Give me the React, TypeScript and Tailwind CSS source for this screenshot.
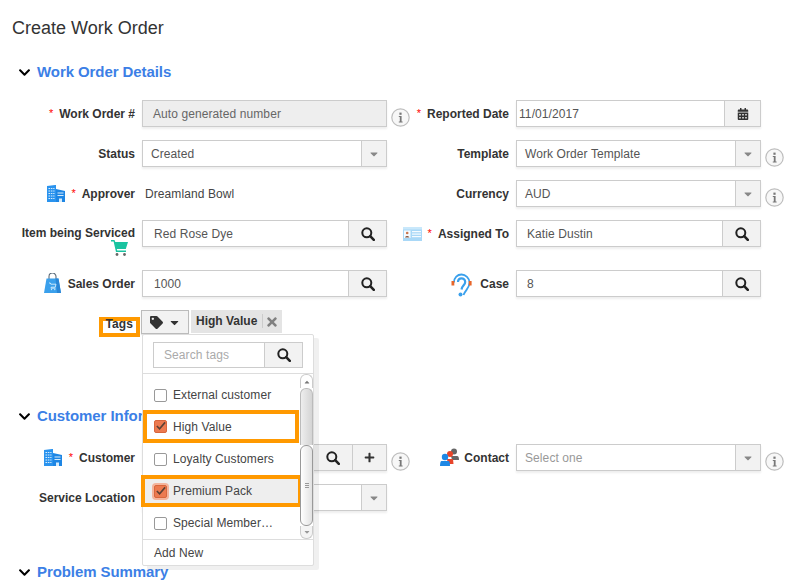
import React from "react";
import { FaCalendarAlt, FaCaretDown, FaCaretUp, FaChevronDown, FaPlus, FaTag, FaTimes } from "react-icons/fa";

const Info = () => (
  <svg width="19" height="19" viewBox="0 0 19 19" className="shrink-0">
    <circle cx="9.5" cy="9.5" r="8.7" fill="#f7f7f7" stroke="#bdbdbd" strokeWidth="1.2" />
    <rect x="8.4" y="4.6" width="2.2" height="2.2" fill="#777" />
    <path d="M7.8 8h2.8v5.4h1v1.1H7.8v-1.1h1V9.1h-1z" fill="#777" />
  </svg>
);

const SearchIcon = () => (
  <svg width="14" height="14" viewBox="0 0 14 14" className="shrink-0">
    <circle cx="5.8" cy="5.800" r="4.500" fill="none" stroke="#222" strokeWidth="2" />
    <path d="M9.200 9.200 12.800 12.800" fill="none" stroke="#222" strokeWidth="2.600" strokeLinecap="round" />
  </svg>
);

const Building = () => (
  <svg width="18" height="17" viewBox="0 0 18 17" className="shrink-0">
    <path d="M0 1 8 0h1v17H0z" fill="#2a93ee" />
    <path d="M9 4l9 2v11H9z" fill="#1e86e4" />
    <g fill="#d6ecfc">
      <rect x="1.500" y="3" width="6" height="1" /><rect x="1.500" y="5.500" width="6" height="1" /><rect x="1.500" y="8" width="6" height="1" /><rect x="1.500" y="10.500" width="6" height="1" /><rect x="1.500" y="13" width="6" height="1" />
      <rect x="10.500" y="7.500" width="6" height="1" /><rect x="10.500" y="10" width="6" height="1" /><rect x="12" y="13.500" width="3" height="3.500" />
    </g>
    <g fill="#2a93ee"><rect x="3.200" y="2" width="0.800" height="13" /><rect x="5.400" y="2" width="0.800" height="13" /></g>
  </svg>
);

const Cart = () => (
  <svg width="17" height="16" viewBox="0 0 17 16" className="shrink-0">
    <path d="M0 0h3.500l.8 2H17l-2.200 7H5.800l.4 1.500H15v1.500H5L2.600 1.500H0z" fill="#19c3a0" />
    <circle cx="6" cy="14.500" r="1.400" fill="#666" />
    <circle cx="13.500" cy="14.500" r="1.400" fill="#666" />
  </svg>
);

const Bag = () => (
  <svg width="17" height="21" viewBox="0 0 17 21" className="shrink-0">
    <path d="M5 6V3.500a3.500 3.500 0 0 1 7 0V6" fill="none" stroke="#5a6b7a" strokeWidth="1.100" />
    <path d="M2.500 5.500h12L17 20H0z" fill="#3aa0ec" />
    <path d="M11.500 5.500h3L17 20h-4z" fill="#2a86d6" />
    <path d="M5 10h1.300l.5 1.200H12l-.8 3H7.200l-.3 1H11.500" fill="none" stroke="#d8eefc" strokeWidth="0.900" />
    <circle cx="7.500" cy="16.600" r="0.700" fill="#d8eefc" /><circle cx="10.800" cy="16.600" r="0.700" fill="#d8eefc" />
  </svg>
);

const Card = () => (
  <svg width="19" height="14" viewBox="0 0 19 14" className="shrink-0">
    <rect width="19" height="14" fill="#a9d8f7" />
    <rect y="0" width="19" height="2.500" fill="#c9e8fb" />
    <rect x="1" y="3.500" width="6.500" height="7.500" fill="#f6fbff" />
    <circle cx="4.200" cy="6" r="1.300" fill="#c9764f" />
    <path d="M2 10.500c.3-2 4-2 4.400 0z" fill="#8a5a45" />
    <g fill="#f6fbff"><rect x="9" y="4" width="9" height="1.200" /><rect x="9" y="6.500" width="9" height="1.200" /><rect x="9" y="9" width="9" height="1.200" /></g>
  </svg>
);

const Ear = () => (
  <svg width="21" height="25" viewBox="0 0 21 25" className="shrink-0">
    <path d="M3 9.500C3 4.500 6.500 1.500 10.500 1.500S18.500 5 18.500 9.500c0 6-4 7-6 12.500" fill="none" stroke="#3aa0ec" strokeWidth="1.800" />
    <path d="M7 9c0-2.300 1.500-3.700 3.500-3.700s3.700 1.500 3.700 3.700c0 3-3.200 3.500-3.700 7.500" fill="none" stroke="#3aa0ec" strokeWidth="2.200" />
    <circle cx="9.500" cy="21.500" r="2" fill="#3aa0ec" />
    <rect x="0.500" y="8" width="2.800" height="4.500" fill="#e8662a" />
    <rect x="17.800" y="8" width="2.800" height="4.500" fill="#e8662a" />
  </svg>
);

const People = () => (
  <svg width="19" height="19" viewBox="0 0 19 19" className="shrink-0">
    <circle cx="14" cy="3.500" r="3" fill="#666" />
    <path d="M11 8h6c1.500 0 2 1.500 2 4h-7z" fill="#666" />
    <circle cx="10" cy="6" r="3" fill="#e8452a" />
    <path d="M7 11h6l.5 5H8z" fill="#e8452a" />
    <circle cx="5" cy="9" r="3.200" fill="#1e88e5" />
    <path d="M1.500 13h7c1 0 1.500 2 1.500 5H0c0-3 .5-5 1.500-5z" fill="#1e88e5" />
  </svg>
);

const Star = () => <span className="mr-[6px] text-[11px] font-normal leading-none text-[#f00]">*</span>;

const Section = ({ title, className }: { title: string; className: string }) => (
  <div className={`flex h-8 items-center pl-[18px] ${className}`}>
    <FaChevronDown className="mr-[6px] text-[13px] text-black" />
    <h2 className="text-[15px] font-bold tracking-[-0.08px] text-[#3c7fe6]">{title}</h2>
  </div>
);

const Box = ({ children, tone = "bg-white" }: { children: React.ReactNode; tone?: string }) => (
  <div className={`flex h-[27px] w-[245px] shrink-0 border border-[#ccc] shadow-[0_2px_2px_rgba(0,0,0,0.07)] ${tone}`}>{children}</div>
);

const Btn = ({ children, className }: { children: React.ReactNode; className: string }) => (
  <div className={`flex shrink-0 items-center justify-center border-l border-[#ccc] bg-[#f2f2f2] text-[#333] ${className}`}>{children}</div>
);

const Search = ({ value, inset = "pl-[11px]" }: { value: string; inset?: string }) => (
  <Box>
    <div className={`flex-1 pt-px leading-[25px] text-[#555] ${inset}`}>{value}</div>
    <Btn className="w-[38px]"><SearchIcon /></Btn>
  </Box>
);

const Select = ({ value, muted }: { value: string; muted?: boolean }) => (
  <Box>
    <div className={`flex-1 pl-2 pt-px leading-[25px] ${muted ? "text-[#999]" : "text-[#555]"}`}>{value}</div>
    <Btn className="w-[25px] bg-[#eeeeee]"><FaCaretDown className="text-[12px] text-[#888]" /></Btn>
  </Box>
);

const LeftLabel = ({ children }: { children: React.ReactNode }) => (
  <div className="mr-[7px] flex h-[27px] w-[135px] shrink-0 items-center justify-end font-bold tracking-normal text-[#333]">{children}</div>
);
const RightLabel = ({ children }: { children: React.ReactNode }) => (
  <div className="mr-[7px] flex h-[27px] w-[109px] shrink-0 items-center justify-end font-bold tracking-normal text-[#333]">{children}</div>
);

const InfoSlot = ({ children }: { children?: React.ReactNode }) => (
  <div className="ml-1 mt-[8px] w-[19px] shrink-0">{children}</div>
);

const Row = ({ children, className = "h-[27px] mb-[13px]" }: { children: React.ReactNode; className?: string }) => (
  <div className={`flex items-start ${className}`}>{children}</div>
);
const Left = ({ children }: { children: React.ReactNode }) => <div className="flex w-[400px] shrink-0 items-start">{children}</div>;
const Right = ({ children }: { children: React.ReactNode }) => <div className="flex w-[405px] shrink-0 items-start">{children}</div>;

const Check = ({ checked, glow }: { checked?: boolean; glow?: boolean }) => (
  <span className={`mr-[6px] flex h-[13px] w-[13px] shrink-0 items-center justify-center rounded-[2px] border ${checked ? "border-[#d9663c] bg-[#ec7a50]" : "border-[#999] bg-white"} ${glow ? "shadow-[0_0_0_2px_#f4b49c]" : ""}`}>
    {checked && (
      <svg width="12" height="11" viewBox="0 0 12 11"><path d="M2 5l3 3 6-7" fill="none" stroke="#5a4035" strokeWidth="1.700" /></svg>
    )}
  </span>
);

export default function App() {
  return (
    <div className="relative h-[580px] w-[805px] overflow-hidden bg-white font-['Liberation_Sans',Arial,sans-serif] text-[12px] tracking-[0.09px] text-[#333]">
      <h1 className="h-14 pl-3 pt-[18px] text-[18px] font-normal leading-5 tracking-normal text-[#333]">Create Work Order</h1>
      <Section title="Work Order Details" className="mb-3" />

      <Row>
        <Left>
          <LeftLabel><Star />Work Order #</LeftLabel>
          <Box tone="bg-[#eeeeee]"><div className="pl-[10px] pt-px leading-[25px] text-[#666]">Auto generated number</div></Box>
          <InfoSlot><Info /></InfoSlot>
        </Left>
        <Right>
          <RightLabel><Star />Reported Date</RightLabel>
          <Box>
            <div className="flex-1 pl-[2px] pt-px leading-[25px] text-[#555]">11/01/2017</div>
            <Btn className="w-[36px]"><FaCalendarAlt className="text-[12px]" /></Btn>
          </Box>
        </Right>
      </Row>

      <Row>
        <Left>
          <LeftLabel>Status</LeftLabel>
          <Select value="Created" />
        </Left>
        <Right>
          <RightLabel>Template</RightLabel>
          <Select value="Work Order Template" />
          <InfoSlot><Info /></InfoSlot>
        </Right>
      </Row>

      <Row>
        <Left>
          <LeftLabel>
            <span className="mr-[6px]"><Building /></span><Star />Approver
          </LeftLabel>
          <div className="-ml-px pl-1 pt-px leading-[27px] text-[#444]">Dreamland Bowl</div>
        </Left>
        <Right>
          <RightLabel>Currency</RightLabel>
          <Select value="AUD" />
          <InfoSlot><Info /></InfoSlot>
        </Right>
      </Row>

      <Row className="h-[37px] mb-[13px]">
        <Left>
          <div className="mr-[7px] flex w-[135px] shrink-0 flex-col items-end pt-[6px] font-bold tracking-normal text-[#333]">
            <span className="h-[14px] leading-[14px]">Item being Serviced</span>
            <span className="mr-[7px]"><Cart /></span>
          </div>
          <Search value="Red Rose Dye" />
        </Left>
        <Right>
          <RightLabel>
            <span className="mr-[6px]"><Card /></span><Star />Assigned To
          </RightLabel>
          <Search value="Katie Dustin" inset="pl-[10px]" />
        </Right>
      </Row>

      <Row>
        <Left>
          <LeftLabel>
            <span className="mr-[7px]"><Bag /></span>Sales Order
          </LeftLabel>
          <Search value="1000" />
        </Left>
        <Right>
          <RightLabel>
            <span className="mr-2 mt-[3px]"><Ear /></span>Case
          </RightLabel>
          <Search value="8" inset="pl-[10px]" />
        </Right>
      </Row>

      <div className="flex h-[90px] items-start">
        <div className="mr-[1px] mt-[7px] flex h-5 w-[140px] shrink-0 justify-end">
          <span className="border-4 border-[#f90] px-[3px] pb-[6px] text-[12px] font-bold leading-[6px] text-[#333]">Tags</span>
        </div>
        <div className="flex h-6 w-12 shrink-0 items-center justify-center gap-[5px] border border-[#bbb] bg-[#f2f2f2] shadow-[0_1px_1px_rgba(0,0,0,0.1)]">
          <FaTag className="text-[13px] text-[#333]" />
          <FaCaretDown className="text-[13px] text-[#333]" />
        </div>
        <div className="ml-[2px] flex h-[23px] w-[91px] items-center bg-[#e4e4e4] pb-[2px] pl-[5px] font-bold tracking-normal text-[#333]">
          <span>High Value</span>
          <span className="ml-[5px] h-[14px] border-l border-[#ccc]" />
          <FaTimes className="ml-[2px] mt-[2px] text-[14px] text-[#808080]" />
        </div>
      </div>

      <Section title="Customer Information" className="mb-3" />

      <Row>
        <Left>
          <LeftLabel>
            <span className="mr-[7px]"><Building /></span><Star />Customer
          </LeftLabel>
          <Box>
            <div className="flex-1" />
            <Btn className="w-10"><SearchIcon /></Btn>
            <Btn className="w-[34px]"><FaPlus className="text-[11px]" /></Btn>
          </Box>
          <InfoSlot><Info /></InfoSlot>
        </Left>
        <Right>
          <RightLabel>
            <span className="mr-[5px]"><People /></span>Contact
          </RightLabel>
          <Select value="Select one" muted />
          <InfoSlot><Info /></InfoSlot>
        </Right>
      </Row>

      <Row className="h-[27px] mb-[45px]">
        <Left>
          <LeftLabel>Service Location</LeftLabel>
          <Select value="" />
        </Left>
      </Row>

      <Section title="Problem Summary" className="" />

      <div className="absolute left-[142px] top-[334px] flex h-[232px] w-[172px] flex-col rounded-[2px] border border-[#ddd] bg-white shadow-[5px_4px_0_rgba(0,0,0,0.06)]">
        <div className="h-[39px] shrink-0 border-b border-[#ddd] px-[10px] pt-[7px]">
          <div className="flex h-[26px] border border-[#ccc] bg-white">
            <div className="flex-1 pl-[10px] leading-[24px] text-[#aaa]">Search tags</div>
            <Btn className="w-[38px]"><SearchIcon /></Btn>
          </div>
        </div>
        <div className="relative h-[166px] shrink-0 border-b border-[#ddd] pt-[5px] text-[#444]">
          <div className="flex h-8 items-center pl-[11px]"><Check />External customer</div>
          <div className="-mt-px flex h-[33px] w-[156px] items-center border-4 border-[#f90] pl-[7px]"><Check checked />High Value</div>
          <div className="flex h-8 items-center pl-[11px]"><Check />Loyalty Customers</div>
          <div className="-ml-[2px] flex h-8 w-[161px] items-center border-4 border-[#f90] bg-[#eeeeee] pl-[9px]"><Check checked glow />Premium Pack</div>
          <div className="flex h-8 items-center pl-[11px]"><Check />Special Member…</div>
          <div className="absolute right-0 top-0 flex h-[165px] w-[13px] flex-col">
            <div className="flex h-[14px] items-center justify-center rounded-t-[6px] border-x border-t border-[#ccc] bg-white"><FaCaretUp className="text-[8px] text-[#777]" /></div>
            <div className="h-[57px] rounded-t-[6px] border-x border-t border-[#bbb] bg-linear-to-r from-[#eeeeee] to-[#d4d4d4]" />
            <div className="flex h-[81px] flex-col items-center justify-center gap-px rounded-[6px] border border-[#999] bg-linear-to-r from-white to-[#e2e2e2]">
              <span className="h-px w-1 bg-[#999]" /><span className="h-px w-1 bg-[#999]" /><span className="h-px w-1 bg-[#999]" />
            </div>
            <div className="flex flex-1 items-center justify-center rounded-b-[6px] border-x border-b border-[#ccc] bg-[#f4f4f4]"><FaCaretDown className="text-[8px] text-[#999]" /></div>
          </div>
        </div>
        <div className="flex-1 pl-[11px] pt-px leading-[24px] text-[#444]">Add New</div>
      </div>
    </div>
  );
}
